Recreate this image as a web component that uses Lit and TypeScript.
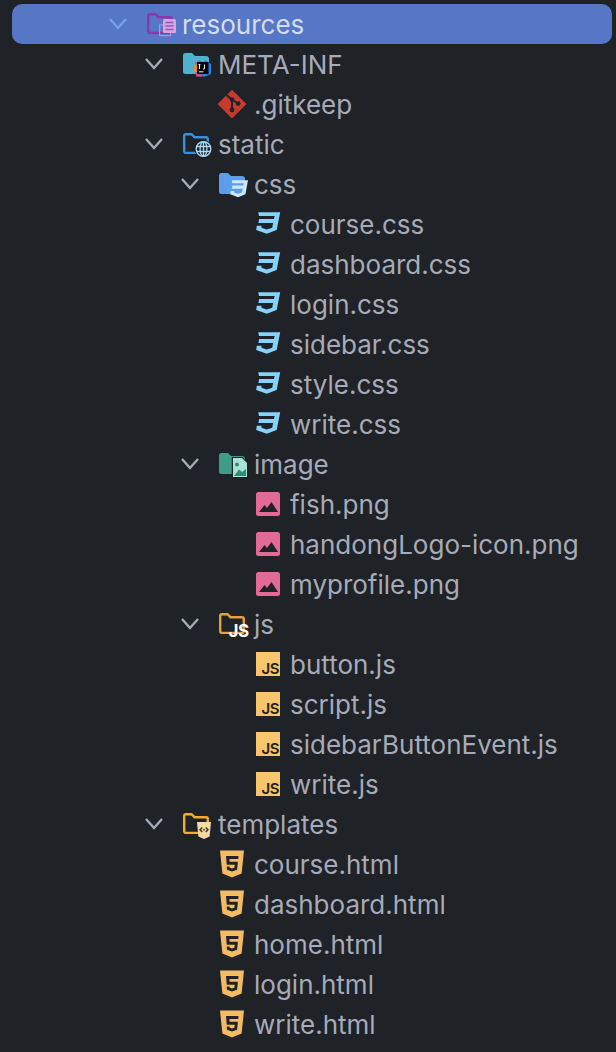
import { LitElement, html, css, svg } from "lit";
import { customElement } from "lit/decorators.js";

type Kind = "res" | "meta" | "git" | "static" | "cssf" | "css" | "imgf" | "png" | "jsf" | "js" | "tplf" | "html";
interface Row { name: string; level: number; kind: Kind; open?: boolean; sel?: boolean }

const rows: Row[] = [
  { name: "resources", level: 0, kind: "res", open: true, sel: true },
  { name: "META-INF", level: 1, kind: "meta", open: true },
  { name: ".gitkeep", level: 2, kind: "git" },
  { name: "static", level: 1, kind: "static", open: true },
  { name: "css", level: 2, kind: "cssf", open: true },
  { name: "course.css", level: 3, kind: "css" },
  { name: "dashboard.css", level: 3, kind: "css" },
  { name: "login.css", level: 3, kind: "css" },
  { name: "sidebar.css", level: 3, kind: "css" },
  { name: "style.css", level: 3, kind: "css" },
  { name: "write.css", level: 3, kind: "css" },
  { name: "image", level: 2, kind: "imgf", open: true },
  { name: "fish.png", level: 3, kind: "png" },
  { name: "handongLogo-icon.png", level: 3, kind: "png" },
  { name: "myprofile.png", level: 3, kind: "png" },
  { name: "js", level: 2, kind: "jsf", open: true },
  { name: "button.js", level: 3, kind: "js" },
  { name: "script.js", level: 3, kind: "js" },
  { name: "sidebarButtonEvent.js", level: 3, kind: "js" },
  { name: "write.js", level: 3, kind: "js" },
  { name: "templates", level: 1, kind: "tplf", open: true },
  { name: "course.html", level: 2, kind: "html" },
  { name: "dashboard.html", level: 2, kind: "html" },
  { name: "home.html", level: 2, kind: "html" },
  { name: "login.html", level: 2, kind: "html" },
  { name: "write.html", level: 2, kind: "html" },
];

const BG = "#1f2226";
const folderPath = "M1 4.5 Q1 2 3.5 2 H10 L13 5 H24 Q27 5 27 8 V20.5 Q27 23 24.5 23 H3.5 Q1 23 1 20.5 Z";
const outline = (c: string) =>
  svg`<path d="M2.2 5 Q2.2 3.2 4 3.2 H9.5 L12.5 6.2 H24 Q25.8 6.2 25.8 8 V20 Q25.8 21.9 24 21.9 H4 Q2.2 21.9 2.2 20 Z" fill="none" stroke=${c} stroke-width="2.4"/>`;
const filled = (c: string) => svg`<path d=${folderPath} fill=${c}/>`;

const css3 = (x: number, y: number, sx: number, sy: number, c: string) => svg`
  <g transform="translate(${x} ${y}) scale(${sx} ${sy})">
    <path d="M3 1 H25 L21.5 20 L11.5 24 L1 20 L1.6 15.5 H6.5 L6.2 17.6 L11.4 19.4 L17 17.5 L17.9 12.6 H3.2 L4 8.2 H18.8 L19.4 5.2 H3.8 Z" fill=${c}/>
  </g>`;

const icons: Record<Kind, unknown> = {
  res: svg`${outline("#8f35ab")}
    <rect x="13.6" y="14" width="11" height="10.6" fill="none" stroke="#c88ad8" stroke-width="1.2"/>
    <rect x="17" y="8" width="13" height="14" rx="1.5" fill="#d9a4e6"/>
    <path d="M19.5 11.5 H27.5 M19.5 15 H27.5 M19.5 18.5 H27.5" stroke="#8f5bb0" stroke-width="1.6"/>`,
  meta: svg`${filled("#4eb3cf")}
    <path d="M13 12 L18 9 L23 15 L20 26 L14 25.5 Z" fill="#d6427f"/>
    <path d="M23 9 L29 13 L29 23 L22 26 L19 24 Z" fill="#2f7be8"/>
    <path d="M12 15 L16 12 L17 21 L12 21 Z" fill="#f08a2c"/>
    <rect x="15" y="11" width="11.5" height="12" fill="#000"/>
    <path d="M17.5 13.5 V18 M16.6 13.5 H18.4 M22.5 13.5 V17 Q22.5 18.2 21 18" stroke="#fff" stroke-width="1.1" fill="none"/>
    <path d="M17 20.8 H21.5" stroke="#fff" stroke-width="1"/>`,
  git: svg`<path d="M14 -0.2 L27.4 13 L14 26.4 L0.6 13 Z" fill="#c63a30" stroke="#c63a30" stroke-linejoin="round" stroke-width="1.5"/>
    <path d="M8.7 4 L14 9 V19 M14 8.5 L20 12.5" stroke="${BG}" stroke-width="2" fill="none"/>
    <circle cx="14" cy="8.5" r="2.2" fill="${BG}"/><circle cx="14" cy="19" r="2.4" fill="${BG}"/><circle cx="20.2" cy="12.6" r="2.3" fill="${BG}"/>`,
  static: svg`${outline("#3a8fd9")}
    <circle cx="21.5" cy="18" r="9" fill="${BG}"/>
    <circle cx="21.5" cy="18" r="7.3" fill="none" stroke="#a9d8f7" stroke-width="1.4"/>
    <ellipse cx="21.5" cy="18" rx="3.4" ry="7.3" fill="none" stroke="#a9d8f7" stroke-width="1.3"/>
    <path d="M21.5 10.7 V25.3 M14.6 15.5 H28.4 M14.6 20.5 H28.4" stroke="#a9d8f7" stroke-width="1.3"/>`,
  cssf: svg`${filled("#5b9ee9")}
    ${css3(11.5, 8.5, 0.74, 0.74, "#cfe6fb")}`,
  css: css3(1.2, 0.2, 1, 0.94, "#85d3fb"),
  imgf: svg`${filled("#3e9c87")}
    <path d="M13.8 6 H24.5 L30 11.5 V27 H13.8 Z" fill="${BG}"/>
    <path d="M15 7 H24 L29 12 V26 H15 Z" fill="#a6e3d3"/>
    <circle cx="19" cy="13.5" r="2" fill="#2f8c79"/>
    <path d="M16 25 L21 18.5 L24 21 L28 18 V25 Z" fill="#2f8c79"/>`,
  png: svg`<rect x="2" y="1" width="24" height="24" rx="2.5" fill="#e46a96"/>
    <path d="M5 21 L10.5 14 L13 17 L17.5 11 L24 21 Z" fill="${BG}"/>`,
  jsf: svg`${outline("#e0a33e")}
    <text x="10.5" y="26" class="ov">JS</text>`,
  js: svg`<rect x="2" y="1" width="24" height="24" fill="#f8c66d"/>
    <text x="7.6" y="23" class="jsl">JS</text>`,
  tplf: svg`${outline("#f0ad30")}
    <path d="M15 11 H29 L27.6 25.5 L22 28 L16.4 25.5 Z" fill="#f6d9a4"/>
    <path d="M20.3 16.5 L18 18.8 L20.3 21 M23.7 16.5 L26 18.8 L23.7 21 M21.2 18.8 H22.8" stroke="#3a2f1a" stroke-width="1.4" fill="none"/>`,
  html: svg`<path d="M2 -0.5 H26 L23.6 22.5 L14 26.5 L4.4 22.5 Z" fill="#f3bb64"/>
    <path d="M8 5 H20.5 L20.2 8 H11.3 L11.6 10.8 H19.9 L19.1 18.7 L14 20.5 L9 18.7 L8.7 15.5 H11.5 L11.7 16.7 L14 17.5 L16.4 16.7 L16.7 13.7 H8.8 Z" fill="${BG}"/>`,
};

@customElement("app-root")
export class AppRoot extends LitElement {
  static styles = css`
    :host {
      display: block;
      width: 616px;
      height: 1052px;
      overflow: hidden;
      background: #1f2226;
      font-family: Inter, "Noto Sans", sans-serif;
    }
    .tree { display: flex; flex-direction: column; padding: 4px 4px 0 12px; }
    .row {
      display: flex;
      align-items: center;
      height: 40px;
      flex: none;
      color: #a6abb9;
      font-size: 26px;
      white-space: nowrap;
    }
    .row.sel {
      background: #5676c6;
      border-radius: 10px;
      color: #d5dcea;
    }
    .sel .chev { stroke: #7b9fea; }
    .chev {
      width: 46px;
      height: 40px;
      flex: none;
      fill: none;
      stroke: #a6abb9;
      stroke-width: 2.4;
    }
    .icon { width: 30px; height: 30px; flex: none; margin: 4px 6px 0 0; overflow: visible; }
    .ov { font: 700 17px Inter, sans-serif; letter-spacing: -0.5px; fill: #fff; }
    .jsl { font: 600 15px Inter, sans-serif; letter-spacing: -0.6px; fill: #222; }
  `;

  render() {
    return html`<div class="tree">
      ${rows.map(
        (r) => html`<div class="row ${r.sel ? "sel" : ""}" style="padding-left:${88 + r.level * 36}px">
          ${r.open
            ? html`<svg class="chev" viewBox="0 0 46 40"><path d="M10 15 L18 24 L26 15"/></svg>`
            : html`<span class="chev"></span>`}
          <svg class="icon" viewBox="0 0 30 30">${icons[r.kind]}</svg>
          <span class="label">${r.name}</span>
        </div>`
      )}
    </div>`;
  }
}
